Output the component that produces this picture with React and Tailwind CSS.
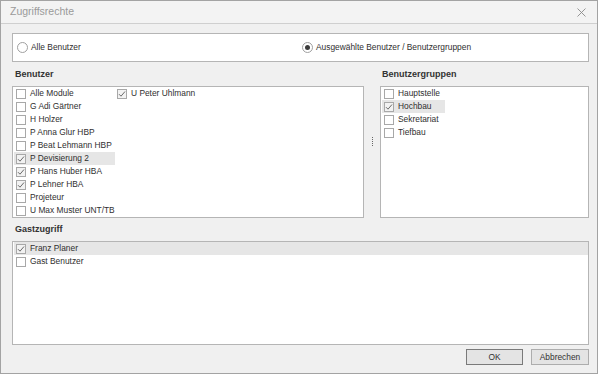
import { useState } from "react";

const users1 = [
    { name: "Alle Module", checked: false },
    { name: "G Adi Gärtner", checked: false },
    { name: "H Holzer", checked: false },
    { name: "P Anna Glur HBP", checked: false },
    { name: "P Beat Lehmann HBP", checked: false },
    { name: "P Devisierung 2", checked: true, active: true },
    { name: "P Hans Huber HBA", checked: true },
    { name: "P Lehner HBA", checked: true },
    { name: "Projeteur", checked: false },
    { name: "U Max Muster UNT/TB", checked: false }
];

const users2 = [{ name: "U Peter Uhlmann", checked: true }];

const groups = [
    { name: "Hauptstelle", checked: false },
    { name: "Hochbau", checked: true, active: true },
    { name: "Sekretariat", checked: false },
    { name: "Tiefbau", checked: false }
];

const guests = [
    { name: "Franz Planer", checked: true, active: true },
    { name: "Gast Benutzer", checked: false }
];

const Check = ({ checked }) => (
    <span
        className={`w-[10px] h-[10px] shrink-0 border flex items-center justify-center ${
            checked ? "border-[#a8a8a8] bg-[#f2f2f2]" : "border-[#a8a8a8] bg-white"
        }`}
    >
        {checked && (
            <svg width="8" height="8" viewBox="0 0 8 8">
                <path d="M1 4.2 L3 6.2 L7 1.5" fill="none" stroke="#5a5a5a" strokeWidth="0.9" />
            </svg>
        )}
    </span>
);

const Row = ({ item, full }) => (
    <div
        className={`h-[13px] flex items-center gap-[4px] pl-[2px] ${full ? "w-full" : ""} ${
            item.active ? "bg-[#e6e6e6]" : ""
        }`}
    >
        <Check checked={item.checked} />
        <span className="text-[#2f2f2f] whitespace-nowrap leading-none">{item.name}</span>
    </div>
);

const Radio = ({ checked, label }) => (
    <label className="flex items-center gap-[3px]">
        <span className="w-[11px] h-[11px] rounded-full border border-[#a0a0a0] bg-white flex items-center justify-center">
            {checked && <span className="w-[5px] h-[5px] rounded-full bg-[#3c3c3c]" />}
        </span>
        <span className="text-[#2f2f2f] leading-none">{label}</span>
    </label>
);

export default function App() {
    const [mode] = useState("selected");

    return (
        <div className="w-[600px] h-[375px] bg-white font-['Liberation_Sans',Arial,sans-serif] text-[8.4px]">
            <div className="w-[598px] h-[374px] border border-[#a3a3a3] bg-[#f0f0f0] flex flex-col">
                {/* Title bar */}
                <div className="h-[23px] shrink-0 border-b border-[#cfcfcf] flex items-center justify-between pl-[9px] pr-[11px] bg-[#f3f3f3]">
                    <span className="text-[10.5px] text-[#9a9a9a]">Zugriffsrechte</span>
                    <svg width="9" height="9" viewBox="0 0 9 9">
                        <path d="M0.5 0.5 L8.5 8.5 M8.5 0.5 L0.5 8.5" stroke="#8a8a8a" strokeWidth="0.9" />
                    </svg>
                </div>

                {/* Body */}
                <div className="flex-1 flex flex-col pl-[11px] pr-[8px] pt-[9px]">
                    {/* Radio choice */}
                    <div className="h-[29px] border border-[#b5b5b5] bg-white flex items-center pl-[4px]">
                        <div className="w-[285px]">
                            <Radio checked={mode === "all"} label="Alle Benutzer" />
                        </div>
                        <Radio checked={mode === "selected"} label="Ausgewählte Benutzer / Benutzergruppen" />
                    </div>

                    {/* Users and groups */}
                    <div className="flex">
                        <div className="w-[352px] flex flex-col">
                            <div className="h-[24px] flex items-center pl-[3px] pt-[1px]">
                                <span className="font-bold text-[9px] text-[#333]">Benutzer</span>
                            </div>
                            <div className="h-[132px] border border-[#b5b5b5] bg-white flex pl-px">
                                <div className="w-[101px] flex flex-col">
                                    {users1.map((u, i) => (
                                        <Row key={i} item={u} full />
                                    ))}
                                </div>
                                <div className="flex flex-col">
                                    {users2.map((u, i) => (
                                        <Row key={i} item={u} />
                                    ))}
                                </div>
                            </div>
                        </div>

                        {/* Splitter */}
                        <div className="w-[16px] flex items-center justify-center pt-[24px]">
                            <div className="flex flex-col gap-[1px] -mt-[22px]">
                                <span className="w-px h-px bg-[#666]" />
                                <span className="w-px h-px bg-[#666]" />
                                <span className="w-px h-px bg-[#666]" />
                                <span className="w-px h-px bg-[#666]" />
                                <span className="w-px h-px bg-[#666]" />
                            </div>
                        </div>

                        <div className="w-[209px] flex flex-col">
                            <div className="h-[24px] flex items-center pl-[2px] pt-[1px]">
                                <span className="font-bold text-[9px] text-[#333]">Benutzergruppen</span>
                            </div>
                            <div className="h-[132px] border border-[#b5b5b5] bg-white flex pl-px">
                                <div className="w-[63px] flex flex-col">
                                    {groups.map((g, i) => (
                                        <Row key={i} item={g} full />
                                    ))}
                                </div>
                            </div>
                        </div>
                    </div>

                    {/* Guest access */}
                    <div className="h-[23px] flex items-center pl-[3px] pt-[1px]">
                        <span className="font-bold text-[9px] text-[#333]">Gastzugriff</span>
                    </div>
                    <div className="h-[104px] border border-[#b5b5b5] bg-white flex flex-col pl-px">
                        {guests.map((g, i) => (
                            <Row key={i} item={g} full />
                        ))}
                    </div>

                    {/* Buttons */}
                    <div className="flex justify-end gap-[8px] mt-[4px]">
                        <button className="w-[57px] h-[16px] border border-[#7a7a7a] bg-[#e4e4e4] text-[#333] leading-none">
                            OK
                        </button>
                        <button className="w-[58px] h-[16px] border border-[#adadad] bg-[#e4e4e4] text-[#333] leading-none">
                            Abbrechen
                        </button>
                    </div>
                </div>
            </div>
        </div>
    );
}
